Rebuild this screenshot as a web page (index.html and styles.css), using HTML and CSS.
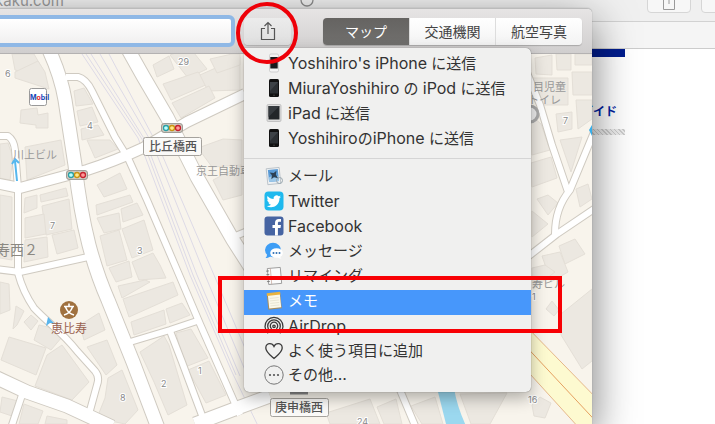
FILE: index.html
```
<!DOCTYPE html>
<html lang="ja">
<head>
    <meta charset="UTF-8">
    <meta name="viewport" content="width=device-width, initial-scale=1.0">
    <title>マップ</title>
    <link rel="stylesheet" href="styles.css">
</head>
<body>
    <!-- Browser behind the map window -->
    <div class="browser">
        <div class="browser-top">
            <span class="address">kaku.com</span>
            <svg class="reload" width="14" height="14" viewBox="0 0 14 14"><circle cx="7" cy="7" r="6" fill="none" stroke="#8c8c8c" stroke-width="1.3"/></svg>
            <div class="browser-buttons">
                <button class="browser-button" aria-label="共有">
                    <svg width="14" height="20" viewBox="0 0 14 20"><path d="M5 7.500H1.500V18.500H12.500V7.500H9M7 4V13" fill="none" stroke="#9a9a9a"/></svg>
                </button>
                <button class="browser-button" aria-label="タブ"></button>
            </div>
        </div>
        <div class="browser-tabs"></div>
        <div class="page">
            <div class="page-bar"></div>
            <a class="page-link" href="#">ガイド</a>
            <div class="page-strip"></div>
        </div>
    </div>

    <!-- Map window -->
    <div class="window">
        <div class="toolbar">
            <input class="search" type="text" aria-label="検索">
            <div class="share">
                <button class="share-button" aria-label="共有">
                    <svg width="16" height="20" viewBox="0 0 16 20"><path d="M5 7.500H1.500V18.500H14.500V7.500H11M8 13V1.500M4.500 5L8 1.500L11.500 5" fill="none" stroke="#555" stroke-width="1.200"/></svg>
                </button>
                <span class="ring"></span>

                <div class="menu">
                    <button class="item">
                        <svg class="icon" viewBox="0 0 20 20"><rect x="5.500" y="1" width="9" height="18" rx="1.500" fill="#f4f4f4" stroke="#bbb" stroke-width=".6"/><rect x="6.300" y="4" width="7.400" height="11.500" fill="#181a1c"/></svg>
                        <span><span class="latin">Yoshihiro's iPhone</span> に送信</span>
                    </button>
                    <button class="item">
                        <svg class="icon" viewBox="0 0 20 20"><rect x="5" y="1" width="10" height="18" rx="1.500" fill="#111"/><path d="M6 4h8v11.500H6z" fill="#2b2f33"/><path d="M6 4h8L6 13z" fill="#3d4247"/><circle cx="10" cy="17.200" r=".8" fill="#444"/></svg>
                        <span><span class="latin">MiuraYoshihiro</span> の <span class="latin">iPod</span> に送信</span>
                    </button>
                    <button class="item">
                        <svg class="icon" viewBox="0 0 20 20"><rect x="3" y="1.500" width="14" height="17" rx="1.200" fill="#dedede" stroke="#aaa" stroke-width=".6"/><path d="M4.500 3h11v13.500h-11z" fill="#222629"/><path d="M4.500 3h11l-11 11z" fill="#363b3f"/></svg>
                        <span><span class="latin">iPad</span> に送信</span>
                    </button>
                    <button class="item">
                        <svg class="icon" viewBox="0 0 20 20"><rect x="5" y="1" width="10" height="18" rx="1.500" fill="#111"/><path d="M6 4h8v11.500H6z" fill="#2b2f33"/><path d="M6 4h8L6 13z" fill="#3d4247"/><circle cx="10" cy="17.200" r=".8" fill="#444"/></svg>
                        <span><span class="latin">Yoshihiro</span>の<span class="latin">iPhone</span> に送信</span>
                    </button>
                    <hr class="separator">
                    <button class="item">
                        <svg class="icon" viewBox="0 0 20 20"><g transform="rotate(-6 10 10)"><rect x="3" y="2" width="13" height="16" fill="#eef1f3" stroke="#aab4bc" stroke-width=".7"/><rect x="4.500" y="3.500" width="10" height="12" fill="#5b9bd6"/><path d="M4.500 11l3-1 3 2 4-2v5.500h-10z" fill="#9cc7e8"/><path d="M6 6l4 1 3-2-1 4 2 4-4-2-3 2 1-4z" fill="#2d4053"/></g><circle cx="15.500" cy="14.500" r="3" fill="none" stroke="#9aa7b0" stroke-width="1"/></svg>
                        <span>メール</span>
                    </button>
                    <button class="item">
                        <svg class="icon" viewBox="0 0 20 20"><rect x=".5" y=".5" width="19" height="19" rx="4" fill="#1fb9ee"/><path d="M17 5.700c-.5.300-1.100.400-1.700.500.600-.400 1-.900 1.300-1.600-.6.300-1.200.600-1.900.7a3 3 0 0 0-5.100 2.700C7.200 7.900 5 6.700 3.600 4.900c-.8 1.400-.4 3.100.9 4-.5 0-.9-.1-1.300-.4 0 1.500 1 2.700 2.400 3-.4.100-.9.100-1.300.1.400 1.200 1.500 2 2.800 2.100A6 6 0 0 1 2.700 15c4.600 2.800 12.700.8 12.800-7.800.6-.4 1.100-.9 1.500-1.500z" fill="#fff"/></svg>
                        <span class="latin">Twitter</span>
                    </button>
                    <button class="item">
                        <svg class="icon" viewBox="0 0 20 20"><rect x=".5" y=".5" width="19" height="19" rx="3" fill="#4664a2"/><path d="M11 19.500V12H8.500V9H11V7c0-2.600 1.400-4 3.800-4h2.200v2.800h-1.600c-1.200 0-1.500.5-1.500 1.500V9H17l-.5 3h-2.600v7.500z" fill="#fff"/></svg>
                        <span class="latin">Facebook</span>
                    </button>
                    <button class="item">
                        <svg class="icon" viewBox="0 0 20 20"><ellipse cx="9" cy="9" rx="8" ry="7.200" fill="#3d9df5"/><path d="M3 13c0 2-.5 3-1.500 4 2 0 4-.5 5-2z" fill="#3d9df5"/><ellipse cx="12.500" cy="12" rx="6.300" ry="4.800" fill="#fff"/><path d="M16 15c0 1.300.700 2 1.500 2.600-1.500 0-3-.5-4-1.500z" fill="#fff"/><g fill="#2f6fb5"><circle cx="9.500" cy="12" r="1"/><circle cx="12.500" cy="12" r="1"/><circle cx="15.500" cy="12" r="1"/></g></svg>
                        <span>メッセージ</span>
                    </button>
                    <button class="item">
                        <svg class="icon" viewBox="0 0 20 20"><g transform="rotate(-5 10 10)"><rect x="4" y="2" width="13" height="16" fill="#fbfbfb" stroke="#8e8e8e" stroke-width=".8"/><path d="M7 2v16" stroke="#c4a59a" stroke-width=".7"/><path d="M2.500 4.500h3M2.500 8h3M2.500 11.500h3M2.500 15h3" stroke="#777" stroke-width=".8"/></g></svg>
                        <span>リマインダ</span>
                    </button>
                    <button class="item selected">
                        <svg class="icon" viewBox="0 0 20 20"><g transform="rotate(-6 10 10)"><rect x="3.500" y="3" width="13.500" height="15" fill="#a88d5c"/><rect x="4.500" y="2.500" width="12" height="14.500" fill="#fbf8ea"/><rect x="3.500" y="1.500" width="13.500" height="2.800" fill="#e9b33f"/><path d="M6 7h9M6 9.500h9M6 12h9M6 14.500h9" stroke="#dedac6" stroke-width=".6"/></g></svg>
                        <span>メモ</span>
                        <span class="frame"></span>
                    </button>
                    <button class="item">
                        <svg class="icon" viewBox="0 0 20 20" fill="none" stroke="#3a3a3a" stroke-width="1.300"><path d="M4.200 17.200A9 9 0 1 1 15.800 17.200M5.900 14.900A6.300 6.300 0 1 1 14.100 14.900M7.700 12.800A3.700 3.700 0 1 1 12.300 12.800"/><circle cx="10" cy="10.300" r="1.200"/></svg>
                        <span class="latin">AirDrop</span>
                    </button>
                    <button class="item short">
                        <svg class="icon" viewBox="0 0 20 20"><path d="M10 17.500C6 14 1.800 10.800 1.800 6.900 1.800 4.300 3.700 2.700 5.800 2.700 7.700 2.700 9.200 3.700 10 5.500 10.800 3.700 12.300 2.700 14.200 2.700c2.100 0 4 1.600 4 4.200 0 3.900-4.200 7.100-8.200 10.600z" fill="none" stroke="#3a3a3a" stroke-width="1.300"/></svg>
                        <span>よく使う項目に追加</span>
                    </button>
                    <button class="item short">
                        <svg class="icon" viewBox="0 0 20 20"><circle cx="10" cy="10" r="9.200" fill="none" stroke="#777" stroke-width="1"/><g fill="#555"><circle cx="6" cy="10" r="1.100"/><circle cx="10" cy="10" r="1.100"/><circle cx="14" cy="10" r="1.100"/></g></svg>
                        <span>その他<span class="latin">...</span></span>
                    </button>
                </div>
            </div>
            <div class="segments">
                <button class="segment active">マップ</button>
                <button class="segment">交通機関</button>
                <button class="segment">航空写真</button>
            </div>
        </div>

        <svg class="map" viewBox="0 54 592 370" preserveAspectRatio="xMinYMin slice">
            <defs>
                <g id="signal">
                    <rect x="-10.500" y="-4.500" width="21" height="9" rx="2.500" fill="#cfc9bf" stroke="#8d8a84" stroke-width=".8"/>
                    <g stroke-width="1.300"><circle cx="-6" r="2.500" fill="#bff" stroke="#2a9fa5"/><circle r="2.500" fill="#ffe98a" stroke="#c99416"/><circle cx="6" r="2.500" fill="#f99" stroke="#c5222f"/></g>
                </g>
                <g id="roads" fill="none" stroke-linejoin="round">
                    <g class="wide">
                        <path d="M49 50Q61 76 65 100L75 165Q80 210 89 245Q97 275 108 300L133 362L158 428"/>
                        <path d="M125 44L143 76L167 117L197 177L233 240L265 290"/>
                        <path d="M-5 377L27 392L67 406L112 427"/>
                        <path d="M195 424L240 407L270 396"/>
                    </g>
                    <g class="medium"><path d="M245 94L187 122L143 148Q115 161 87 170L20 188L-5 183"/></g>
                    <g class="narrow">
                        <path d="M66 77L78 77Q86 79 92 91L115 137L128 158L147 200L180 277L200 324L240 415"/>
                        <path d="M-3 136H8Q14 140 15 150L18 188V273Q23 292 34 308C48 323 62 332 77 351L95 371Q100 377 97 385L89 414"/>
                        <path d="M-5 269L20 272L88 257"/><path d="M22 395L11 428"/>
                        <path d="M130 342L170 330L200 320"/><path d="M170 331L182 362L203 418"/>
                        <path d="M400 390L416 428"/>
                        <path d="M522 60L540 105L552 145L568 192M597 125L570 190Q555 208 555 234"/>
                        <path d="M525 259L557 234L597 207"/>
                        <path d="M233 237L250 230"/>
                    </g>
                </g>
            </defs>
            <rect class="land" x="0" y="54" width="592" height="370"/>
            <!-- Blocks and buildings -->
            <g class="buildings">
                <path d="M12 54H34L42 68L35 75L15 70Z"/>
                <path d="M15 72L38 61L45 72L49 89L15 78Z"/><path d="M21 110L37 108L38 115L48 113V128H36V125L20 123Z"/>
                <path d="M74 91L84 88L93 104L76 106Z"/><path d="M77 111L92 107L98 122L80 126Z"/><path d="M81 129L98 125L104 135L82 140Z"/>
                <path d="M153 65L169 56L174 69L157 77Z"/><path d="M170 55L190 48L207 69L188 78Z"/><path d="M163 84L198 72L208 84L171 100Z"/><path d="M200 75L240 57V90L208 91Z"/><path d="M172 103L209 86L215 98L181 118Z"/><path d="M210 59L232 54H240V65L217 73Z"/>
                <path d="M0 144L8 143L13 158L10 180L0 178Z"/><path d="M25 147L61 140L65 165L27 180Z"/>
                <path d="M87 140L110 140L118 149L95 158Z"/>
                <path d="M97 185L120 173L127 189L104 197Z"/><path d="M96 205L130 195L133 202L97 215Z"/><path d="M97 218L119 213L121 229L104 233Z"/><path d="M121 209L137 203L143 215L123 222Z"/><path d="M122 229L144 220L153 250L132 258Z"/><path d="M100 236L119 230L127 260L107 266Z"/><path d="M109 268L129 261L132 277L116 282Z"/><path d="M132 262L153 253L160 265L166 278L139 280Z"/>
                <path d="M25 198L37 195V208L24 213Z"/><path d="M40 195L66 188L68 196L41 202Z"/><path d="M42 206L69 199L72 229L46 235Z"/><path d="M25 218L44 214L46 234L25 238Z"/><path d="M25 240L47 237L48 257L24 262Z"/><path d="M52 235L74 230L78 248L57 254Z"/><path d="M0 195L12 197V260L0 258Z"/>
                <path d="M198 148L223 139L242 140V165L212 167Z"/><path d="M213 180L242 165V195L223 200Z"/>
                <path d="M118 286L145 280L150 282L122 298Z"/><path d="M123 299L173 282L178 295L129 317Z"/><path d="M131 322L164 310L166 324L134 335Z"/><path d="M166 309L182 303L190 315L170 323Z"/>
                <path d="M0 282L9 284L10 310L0 314Z"/><path d="M16 306L24 311L17 325L13 329Z"/><path d="M24 322L31 315L38 321L31 330Z"/><path d="M9 337L46 348L36 375L1 360Z"/><path d="M39 325L52 328L62 337L51 350L34 340Z"/><path d="M47 355L62 345L89 382L72 400L35 386Z"/>
                <path d="M80 325L99 313L105 330L84 340Z"/><path d="M87 347L107 340L117 365L106 375Z"/><path d="M108 378L122 370L138 410L125 424L97 418L105 398Z"/>
                <path d="M140 352L164 336L169 345L187 405L168 415L154 382Z"/><path d="M176 333L191 329L208 358L185 367Z"/><path d="M188 370L209 361L226 395L206 403Z"/>
                <path d="M2 397L18 401L12 416L0 412Z"/><path d="M24 404L43 411L38 424H19Z"/><path d="M47 416L67 420V424H45Z"/>
                <path d="M326 413L370 399L380 424H330Z"/><path d="M377 407L396 399L402 424H384Z"/><path d="M411 406L435 397L443 424H422Z"/><path d="M460 394L507 393L490 424H471Z"/><path d="M532 405L540 397L551 403L545 418L534 416Z"/>
                <path d="M535 58L552 55V75L536 74Z"/><path d="M556 54H571V70H557Z"/><path d="M575 54H592V65H575Z"/><path d="M572 72H592V95H573Z"/><path d="M532 78H568V105H540Z"/><path d="M556 114L572 112V129L558 132Z"/><path d="M576 100H592V119L578 129Z"/>
                <path d="M531 115L541 124L550 150L532 155Z"/><path d="M531 163L551 157L557 178L532 187Z"/><path d="M560 140L582 137L571 172Z"/><path d="M537 199L548 195L558 203L548 215Z"/><path d="M532 211L548 224L532 237Z"/><path d="M576 189L588 184L592 199L580 207Z"/>
                <path d="M559 246L575 239L585 254L565 264Z"/><path d="M542 256L560 252L568 272L551 282Z"/><path d="M532 268L545 265L555 272L533 289Z"/>
                <path d="M592 289L561 314V335L582 369L592 361Z"/><path d="M546 309L552 301L559 310L554 316Z"/>
            </g>
            <path class="rail" d="M82 54L138 138L190 275L232 372L260 430M91 54L145 140L197 275L240 376M100 54L153 145L205 275L245 370M109 54L160 150L214 275L250 360M86 54L142 139L193 275L236 375"/>
            <path d="M437 388H454Q457 407 467 428H447Z" fill="#9bd8ef"/>
            <path class="highway" d="M520 320L604 406V440H590L520 363Z"/>
            <path class="highway-line" d="M520 340L604 430"/>
            <use href="#roads" class="road-casing"/>
            <use href="#roads" class="road"/>
            <path d="M17 181L15 161M12 164L15 159L19 163" fill="none" stroke="#55b7ee" stroke-width="2"/>
            <path d="M46 326L48 317L55 324L50 323Z" fill="#5ab5ec"/>
            <path d="M589 130L592 125V136Z" fill="#36aeea"/>
            <use href="#signal" x="172" y="128"/>
            <use href="#signal" x="77" y="175"/>
            <circle cx="530" cy="114" r="8" fill="#eee" stroke="#aaa" stroke-width="3"/>

            <rect x="29.500" y="88.500" width="17" height="17" rx="2" fill="#fff" stroke="#999"/>
            <text class="brand" x="30" y="100">M<tspan fill="#e21d2c">o</tspan>bil</text>
            <circle cx="69" cy="310" r="9" fill="#a0713f"/>
            <path d="M64 306.500H74M69 303.500V306.500M65.500 307C67 311 70 314 74 315M72.500 307C71 311 68 314 64 315" fill="none" stroke="#fff" stroke-width="1.600"/>

            <g class="tag"><rect x="143.500" y="137.500" width="58" height="18" rx="2"/><rect x="270.500" y="398.500" width="58" height="18" rx="2"/></g>
            <path d="M290 393H308" stroke="#888" stroke-width="3"/>
            <g class="tag-text"><text x="149" y="151">比丘橋西</text><text x="275" y="412">庚申橋西</text></g>
            <g class="label">
                <text x="13" y="159">川上ビル</text><text x="196" y="175">京王自動車</text>
                <text x="533" y="91">目児童</text><text x="528" y="104">トイレ</text><text x="532" y="288">寿ビル</text>
            </g>
            <g class="number">
                <text x="5" y="77">6</text><text x="178" y="65">29</text><text x="87" y="129">4</text><text x="50" y="229">7</text>
                <text x="137" y="254">3</text><text x="161" y="387">2</text><text x="198" y="374">1</text><text x="120" y="401">8</text>
                <text x="563" y="124">7</text><text x="532" y="300">1</text><text x="528" y="403">16</text><text x="357" y="425">24</text>
            </g>
            <text class="district" x="-4" y="255">寿西２</text>
            <text class="station" x="51" y="333">恵比寿</text>
        </svg>
    </div>
</body>
</html>
```
FILE: styles.css
```
* {
    box-sizing: border-box;
}
body {
    margin: 0;
    height: 100vh;
    overflow: hidden;
    position: relative;
    background-color: #fff;
    font-family: Inter, "Noto Sans CJK JP", sans-serif;
    color: #333;
}
button {
    font-family: inherit;
    color: inherit;
    border: 0;
    margin: 0;
    padding: 0;
}

/* Browser in the background */
.browser {
    display: flex;
    flex-direction: column;
    height: 100%;
}
.browser-top {
    display: flex;
    align-items: flex-start;
    height: 22px;
    background-color: #f0f0f0;
    border-bottom: 1px solid #d2d2d2;
}
.address {
    width: 300px;
    margin-top: -8px;
    margin-left: -5px;
    font-size: 15px;
    line-height: 18px;
    color: #999;
}
.reload {
    margin-top: -7px;
    margin-left: 5px;
}
.browser-buttons {
    display: flex;
    gap: 10px;
    margin-left: auto;
    margin-right: -30px;
}
.browser-button {
    width: 44px;
    height: 23px;
    margin-top: -10px;
    background-color: #f7f7f7;
    border: 1px solid #d6d6d6;
    border-radius: 4px;
}
.browser-tabs {
    height: 27px;
    background-color: #f5f5f5;
    border-bottom: 1px solid #ccc;
}
.page {
    display: flex;
    flex-direction: column;
    margin-right: 90px;
}
.page-bar {
    height: 8px;
    background-color: #001c8e;
}
.page-link {
    align-self: flex-end;
    margin: 45px 8px 7px 0;
    font-size: 12px;
    line-height: 20px;
    font-weight: bold;
    color: #001ea0;
    text-decoration: none;
}
.page-strip {
    height: 6px;
    background: repeating-linear-gradient(45deg, #ccc 0 1px, #eee 1px 3px);
}

/* Map window */
.window {
    position: absolute;
    top: 8px;
    left: 0;
    right: 123px;
    bottom: 0;
    display: flex;
    flex-direction: column;
    border-top: 1px solid #bbb;
    border-top-right-radius: 5px;
    box-shadow: 0 14px 44px rgba(0, 0, 0, 0.55), 0 0 1px rgba(0, 0, 0, 0.4);
}
.toolbar {
    display: flex;
    align-items: center;
    height: 45px;
    padding-right: 10px;
    background: linear-gradient(#e6e4e4, #d0cece);
    border-bottom: 1px solid #b4b2b2;
    border-top-right-radius: 5px;
}
.search {
    flex: 1;
    min-width: 0;
    height: 32px;
    margin-left: -8px;
    margin-right: 9px;
    padding: 0 12px;
    border: 4px solid #8fb8e6;
    border-radius: 6px;
    background: linear-gradient(#fff, #f1f0f0);
    font-size: 14px;
    outline: none;
}
.share {
    position: relative;
    width: 47px;
    margin-right: 32px;
}
.share-button {
    display: flex;
    align-items: center;
    justify-content: center;
    width: 100%;
    height: 27px;
    border-radius: 4px;
    background: linear-gradient(#ececec, #dfdfdf);
    box-shadow: 0 1px 1px rgba(0, 0, 0, 0.15);
}
.segments {
    display: flex;
    border-radius: 4px;
    overflow: hidden;
    box-shadow: 0 1px 1px rgba(0, 0, 0, 0.2);
}
.segment {
    width: 86px;
    height: 27px;
    background: linear-gradient(#fff, #f3f3f3);
    border-right: 1px solid #ddd;
    font-size: 14px;
    color: #444;
}
.segment:last-child {
    border-right: 0;
}
.segment.active {
    width: 87px;
    background: linear-gradient(#656361, #71706e);
    color: #fff;
}

/* Share menu */
.menu {
    position: absolute;
    z-index: 1;
    top: 30px;
    left: 0;
    min-width: 287px;
    padding: 4px 0;
    background-color: #f0f0ef;
    border-radius: 0 5px 5px 5px;
    box-shadow: 0 6px 16px rgba(0, 0, 0, 0.3), 0 0 1px rgba(0, 0, 0, 0.6);
}
.item {
    display: flex;
    align-items: center;
    gap: 4px;
    width: 100%;
    height: 25px;
    padding-left: 20px;
    padding-bottom: 2px;
    background: none;
    font-size: 15px;
    line-height: 20px;
    white-space: nowrap;
}
.item.short {
    height: 24px;
}
.item.selected {
    position: relative;
    background-color: #4797fb;
    color: #fff;
}
.latin {
    font-size: 16px;
}
.icon {
    width: 20px;
    height: 20px;
}
.separator {
    margin: 6px 0;
    border: 0;
    border-top: 1px solid #d5d5d5;
}

/* Red marks */
.ring {
    position: absolute;
    z-index: 2;
    top: -16px;
    left: -8px;
    width: 62px;
    height: 62px;
    border: 4px solid #ee0008;
    border-radius: 50%;
    pointer-events: none;
}
.frame {
    position: absolute;
    z-index: 2;
    top: -14px;
    right: -31px;
    bottom: -18px;
    left: -26px;
    border: 4px solid #f80004;
    pointer-events: none;
}

/* Map */
.map {
    display: block;
    flex: 1;
    width: 100%;
    min-height: 0;
}
.land {
    fill: #f8f4ec;
}
.buildings {
    fill: #ece8e1;
    stroke: #e4dfd7;
}
.rail {
    fill: none;
    stroke: #dddae6;
    stroke-width: 1;
}
.road-casing {
    --casing: 2px;
    stroke: #cfcac1;
}
.road {
    --casing: 0px;
    stroke: #fff;
}
.wide {
    stroke-width: calc(13px + var(--casing));
}
.medium {
    stroke-width: calc(10px + var(--casing));
}
.narrow {
    stroke-width: calc(6px + var(--casing));
}
.highway {
    fill: #fdfad0;
    stroke: #e5b78a;
}
.highway-line {
    stroke: #e5a060;
    stroke-width: 1;
}
.tag {
    fill: #fbfaf8;
    stroke: #a5a29d;
}
.tag-text {
    font-size: 12px;
    font-weight: 500;
    fill: #555;
}
.label {
    font-size: 11px;
    fill: #999;
}
.number {
    font-size: 9px;
    fill: #888;
    stroke: #fff;
    stroke-width: 2px;
    paint-order: stroke;
}
.district {
    font-size: 14px;
    fill: #8b8882;
}
.station {
    font-size: 12px;
    fill: #9a6250;
}
.brand {
    font-size: 7px;
    font-weight: bold;
    fill: #1446b8;
}
```
